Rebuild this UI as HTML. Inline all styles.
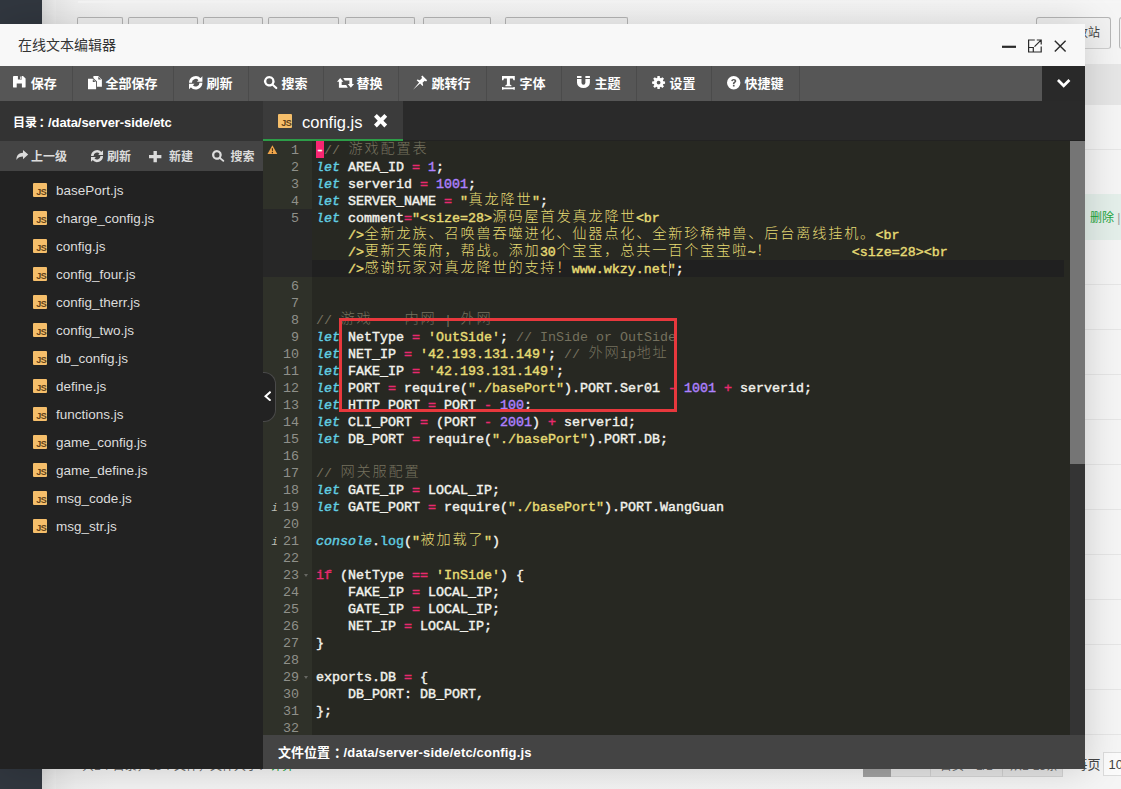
<!DOCTYPE html>
<html lang="zh-CN">
<head>
<meta charset="utf-8">
<title>在线文本编辑器</title>
<style>
*{box-sizing:border-box;margin:0;padding:0}
html,body{width:1121px;height:789px;overflow:hidden}
body{position:relative;background:#f1f1f1;font-family:"Liberation Sans","Noto Sans CJK SC",sans-serif;font-size:13px;color:#333}
.abs{position:absolute}
/* ---------- page behind the dialog ---------- */
#bg-side{left:0;top:0;width:42px;height:789px;background:#31373f}
#bg-main{left:42px;top:0;width:1079px;height:789px;background:linear-gradient(90deg,#dadada 0,#ebebeb 14px,#f0f0f0 15px)}
#bg-panel{left:56px;top:0;width:1065px;height:789px;background:linear-gradient(90deg,#e8e8e8 0,#f0f0f0 20px,#f4f4f4 60px,#f5f5f5 100%)}
.bgbtn{position:absolute;top:17px;height:12px;border:1px solid #b6b6b6;border-bottom:0;border-radius:2px 2px 0 0;background:#f1f1f1}
/* ---------- dialog ---------- */
#dlg{left:0;top:24px;width:1085px;height:745px;background:#222;box-shadow:1px 1px 36px rgba(0,0,0,.17)}
#title{left:0;top:0;width:1085px;height:42px;background:#f8f8f8;color:#333;font-size:14px;line-height:42px;padding-left:18px}
#title svg{position:absolute;top:0;left:0}
#tools{left:0;top:42px;width:1085px;height:35px;background:#292929}
#tools .bar{position:absolute;left:0;top:0;width:1042px;height:35px;background:#565656;display:flex}
.tb{height:35px;border-right:1px solid #4b4b4b;color:#fff;font-weight:bold;font-size:13px;line-height:36px;padding:0 0 0 32.500px;flex:none;white-space:nowrap}
.tb.t-save{padding-left:30.800px}
.ico{position:absolute;display:block;fill:#fff;overflow:visible}
/* ---------- sidebar ---------- */
#side{left:0;top:77px;width:263px;height:668px;background:#222}
#side .hd{position:absolute;left:0;top:0;width:263px;height:40px;background:#333;color:#fff;font-weight:bold;font-size:13px;line-height:43px;padding-left:13px;letter-spacing:-.1px;white-space:nowrap}
#side .hd .cj{font-size:12px;letter-spacing:0}
#side .ops{position:absolute;left:0;top:40px;width:263px;height:30px;background:#444;color:#dcdcdc;font-size:12px;font-weight:bold}
#side .ops span{position:absolute;top:0;height:30px;line-height:33px;white-space:nowrap}
#side .ops svg{fill:#dcdcdc}
.fi{position:absolute;left:0;width:263px;height:28px;color:#dcdcdc;font-size:13.500px;line-height:29px;padding-left:56px;white-space:nowrap}
.fi i,#tab1 i{position:absolute;left:33px;top:7px;width:14px;height:14px;background:#f5be6a;border-radius:1px;color:#5e4017;font:bold 9px/18.500px "Liberation Sans",sans-serif;text-align:right;padding-right:.800px;font-style:normal;letter-spacing:-.5px;overflow:hidden}
#handle{left:263px;top:348px;width:12.500px;height:50px;background:#222;border-radius:0 12px 12px 0;border:1px solid #4a4a4a;border-left:0}
/* ---------- tabs ---------- */
#tabs{left:263px;top:77px;width:822px;height:40px;background:#2a2a2a;border-bottom:1px solid #222}
#tab1{left:0;top:0;width:140px;height:40px;background:#3b3b3b;color:#fff;font-size:16.500px;line-height:43px;white-space:nowrap}
#tab1 i{left:15px;top:13px}
#tabline{left:0;top:37.500px;width:140px;height:2.500px;background:#2d9d48;z-index:2}
#tab1 b{position:absolute;left:39px;top:0;font-weight:normal}
/* ---------- editor ---------- */
#ed{left:263px;top:117px;width:822px;height:594px;background:#272822;overflow:hidden;font-family:"Liberation Mono","Noto Sans CJK SC",monospace;font-size:13.333px;line-height:17px;font-weight:normal;-webkit-text-stroke:.42px;color:#f2f2ec}
#gut{left:0;top:0;width:49px;height:594px;background:#2f3129;color:#8f908a;font-weight:normal;-webkit-text-stroke:0}
#gact{left:0;top:68px;width:49px;height:68px;background:#272727}
.g{position:relative;height:17px;line-height:19px;text-align:right;padding-right:13px;white-space:pre}
.g .warn{position:absolute;left:4px;top:3.800px;width:10.800px;height:9.600px}
.g .info{position:absolute;left:8.500px;top:.5px;font-style:italic;font-weight:normal;font-size:10.500px;color:#c0c1ba}
.g .fold{position:absolute;left:40.500px;top:7.500px;width:0;height:0;border:2.200px solid transparent;border-top:3px solid #666761;border-bottom:0}
#txt{left:53px;top:0;width:760px;height:594px}
.l{height:17px;line-height:19px;white-space:pre}
.l.act{background:#202020;margin-left:-4px;padding-left:4px;width:752px}
.k{color:#61cee2;font-style:italic}
.f{color:#61cee2}
.o,.w{color:#e8296e}
.n{color:#ae81ff}
.s{color:#e6db74}
.c{color:#75715e;font-weight:normal;-webkit-text-stroke:0}
.z{display:inline-block;vertical-align:top;height:17px;font-family:"Noto Sans CJK SC",sans-serif;font-size:14.200px;letter-spacing:1.800px;line-height:17px;font-weight:300;-webkit-text-stroke:0;font-style:normal;position:relative;top:-2.300px;padding-left:.5px;margin-right:-.5px}
.c .z{font-weight:300}
.inv{background:#f92672;color:#f8f8f0;display:inline-block;width:8px;height:17px;vertical-align:top}
#cursor{left:405.500px;top:120px;width:1.200px;height:15px;background:#8a8aa6}
#sb{left:807px;top:0;width:15px;height:594px;background:#343434}
#sbt{left:807px;top:0;width:15px;height:323px;background:#757575}
#redbox{left:76px;top:177px;width:338px;height:94px;border:3px solid #e8383d}
#status{left:263px;top:711px;width:822px;height:34px;background:#444;color:#fff;font-weight:bold;font-size:13px;line-height:35px;padding-left:15px;letter-spacing:.17px;white-space:nowrap}
#status .cj{letter-spacing:0}
.rl{position:absolute;left:1085px;width:36px;height:1px;background:#e6e6e6}
/* text behind dialog */
.bgt{position:absolute;color:#555;font-size:12px;line-height:1;white-space:nowrap}
</style>
</head>
<body>
<div class="abs" id="bg-side"></div>
<div class="abs" id="bg-main"></div>
<div class="abs" id="bg-panel"></div>
<div class="abs" style="left:78px;top:1px;width:1043px;height:1.500px;background:#f6f6f6"></div>
<div class="bgbtn" style="left:77px;width:46px"></div>
<div class="bgbtn" style="left:128px;width:70px"></div>
<div class="bgbtn" style="left:203px;width:60px"></div>
<div class="bgbtn" style="left:268px;width:71px"></div>
<div class="bgbtn" style="left:345px;width:70px"></div>
<div class="bgbtn" style="left:423px;width:68px"></div>
<div class="bgbtn" style="left:505px;width:123px"></div>
<div class="bgbtn" style="left:1036px;top:17px;width:75px;height:32px;border-bottom:1px solid #cfcfcf;border-radius:3px"></div>
<div class="bgbtn" style="left:1119px;top:17px;width:40px;height:32px;border-bottom:1px solid #cfcfcf;border-radius:3px"></div>
<div class="bgt" style="left:1064px;top:27.300px;font-size:12px;color:#444">回收站</div>
<div class="abs" style="left:1085px;top:64px;width:36px;height:41px;background:#e6e6e6"></div>
<div class="abs" style="left:1085px;top:194px;width:36px;height:46px;background:#e4efea"></div>
<div class="rl" style="top:149px"></div><div class="rl" style="top:284px"></div><div class="rl" style="top:329px"></div><div class="rl" style="top:374px"></div><div class="rl" style="top:419px"></div><div class="rl" style="top:464px"></div><div class="rl" style="top:509px"></div><div class="rl" style="top:554px"></div><div class="rl" style="top:599px"></div><div class="rl" style="top:644px"></div><div class="rl" style="top:689px"></div><div class="rl" style="top:734px"></div>
<div class="bgt" style="left:1090px;top:211.500px;color:#20a53a;font-size:12px">删除 <span style="color:#999">|</span></div>
<div class="bgt" style="left:82px;top:760px;font-size:12px;color:#666">共1个目录，13个文件，文件大小：<span style="color:#20a53a">计算</span></div>
<div class="abs" style="left:863px;top:750px;width:200px;height:27px;background:#e4e4e4;border:1px solid #d4d4d4"></div>
<div class="abs" style="left:863px;top:750px;width:28px;height:27px;background:#a2a2a2"></div>
<div class="abs" style="left:930px;top:750px;width:1px;height:27px;background:#d0d0d0"></div>
<div class="abs" style="left:1002px;top:750px;width:1px;height:27px;background:#d0d0d0"></div>
<div class="bgt" style="left:940px;top:760px;font-size:12px;color:#666">首页</div>
<div class="bgt" style="left:976px;top:760px;font-size:12px;color:#666">1/1</div>
<div class="bgt" style="left:1010px;top:760px;font-size:12px;color:#666">从1-13条</div>
<div class="abs" style="left:1103px;top:752px;width:30px;height:24px;background:#fbfbfb;border:1px solid #dcdcdc"></div>
<div class="bgt" style="left:1074.500px;top:758px;font-size:13px;color:#444">每页<span style="margin-left:8px">10</span></div>

<div class="abs" id="dlg">
  <div class="abs" id="title">在线文本编辑器
    <svg width="1085" height="42" viewBox="0 0 1085 42" fill="none" stroke="#2a2a2a">
      <path d="M1002 22.800h14" stroke-width="2.200"/>
      <g transform="translate(1028 15.400)" stroke-width="1.200"><path d="M6.800 .600H.600V12.600H13.200V7M.600 8.100H5.300V12.600M6.500 7.300L13 .800M8.800 .600H13.200V5"/></g>
      <path d="M1054.800 16.700l10.800 10.800M1065.600 16.700l-10.800 10.800" stroke-width="1.400"/>
    </svg>
  </div>
  <div class="abs" id="tools"><div class="bar"><div class="tb t-save" style="width:73px">保存</div><div class="tb t-dup" style="width:101px">全部保存</div><div class="tb t-refresh" style="width:75px">刷新</div><div class="tb t-search" style="width:75px">搜索</div><div class="tb t-retweet" style="width:75px">替换</div><div class="tb t-pin" style="width:88px">跳转行</div><div class="tb t-font" style="width:75px">字体</div><div class="tb t-magnet" style="width:75px">主题</div><div class="tb t-cog" style="width:75px">设置</div><div class="tb t-q" style="width:88px">快捷键</div></div><svg class="ico" style="left:12.5px;top:10.1px" width="12.6" height="11.6" viewBox="0 0 12.6 11.6" fill-rule="evenodd"><path d="M.9 0H10L12.6 2.500V10.700a.9.9 0 0 1-.9.900H.9a.9.9 0 0 1-.9-.900V.9A.9.9 0 0 1 .9 0zM4.900 0V3.400H8.800V0zM3.700 7.400V11.600H8.900V7.400zM7.300.5h1v2.400h-1z"/></svg><svg class="ico" style="left:87.8px;top:9.8px" width="13.9" height="13.2" viewBox="0 0 13.9 13.2" fill-rule="evenodd"><path d="M0 2.700H4.700L8.100 6V13.200H0zM4.800 3.400V6h2.700zM5.400 0h4.800l3.700 3.500v7.200H9V5.600L5.400 2.100zM10.300.8v2.800h2.900z"/></svg><svg class="ico" style="left:188.7px;top:9.6px" width="13.4" height="13.4" viewBox="0 0 13.4 13.4"><path d="M0 6.7A6.7 6.7 0 0 1 11.68 2.22L9.52 4.16A3.8 3.8 0 0 0 2.9 6.7ZM13.4 0.2 L13.4 5.7 L7.9 5.7ZM13.4 6.7A6.7 6.7 0 0 1 1.72 11.18L3.88 9.24A3.8 3.8 0 0 0 10.5 6.7ZM0 13.2 L0 7.7 L5.5 7.7Z"/></svg><svg class="ico" style="left:263.9px;top:10.1px" width="13.5" height="13.2" viewBox="0 0 13.5 13.2" fill-rule="evenodd"><path d="M5.300 0a5.300 5.300 0 0 1 4.350 8.330l3.400 3.050a1.050 1.050 0 0 1-1.500 1.500L8.300 9.650A5.300 5.300 0 1 1 5.300 0zM5.300 2.300a3 3 0 1 0 0 6 3 3 0 0 0 0-6z"/></svg><svg class="ico" style="left:336.6px;top:12.3px" width="17.1" height="9.7" viewBox="0 0 17.1 9.7"><path d="M3.200 0L6.400 3.800H4.700V7.100H9.200L10.800 9.700H1.900V3.800H0zM6.200 0H15.200V5.900H17.100L13.900 9.700 10.700 5.900H12.400V2.600H7.800z"/></svg><svg class="ico" style="left:413.2px;top:10.1px" width="14.5" height="13.7" viewBox="0 0 14.5 13.7"><path d="M0 13.700L6.080 6.630 3.680 4.220 4.380 3.520 6.860 4.150 9.050 1.960 8.270 .620 9.330 -.440 14.140 4.370 13.080 5.430 11.740 4.650 9.550 6.840 10.180 9.320 9.480 10.020 7.070 7.620z"/></svg><svg class="ico" style="left:502.2px;top:10px" width="12.8" height="13.8" viewBox="0 0 12.8 13.8"><path d="M0 0H12.800V4.300H11.500L10.800 2.600H7.900V8.600L9.400 9.200V10.300H3.400V9.200L4.900 8.600V2.600H2L1.300 4.300H0zM0 10.900H1.400V11.500H11.400V10.900H12.800V13.800H11.400V13.200H1.400V13.800H0z"/></svg><svg class="ico" style="left:577.1px;top:10.4px" width="12.9" height="12.1" viewBox="0 0 12.9 12.1"><path d="M0 0H4.500V2.100H0zM8.400 0H12.900V2.100H8.400zM0 2.900H4.500V6.800a1.950 1.950 0 0 0 3.900 0V2.900H12.900V6.800A6.450 5.300 0 0 1 0 6.800z"/></svg><svg class="ico" style="left:651.8px;top:9.9px" width="13.2" height="13.2" viewBox="0 0 13.2 13.2" fill-rule="evenodd"><path d="M5.31 1.87 L5.41 0.11 L7.79 0.11 L7.89 1.87 L9.03 2.34 L10.35 1.17 L12.03 2.85 L10.86 4.17 L11.33 5.31 L13.09 5.41 L13.09 7.79 L11.33 7.89 L10.86 9.03 L12.03 10.35 L10.35 12.03 L9.03 10.86 L7.89 11.33 L7.79 13.09 L5.41 13.09 L5.31 11.33 L4.17 10.86 L2.85 12.03 L1.17 10.35 L2.34 9.03 L1.87 7.89 L0.11 7.79 L0.11 5.41 L1.87 5.31 L2.34 4.17 L1.17 2.85 L2.85 1.17 L4.17 2.34ZM4.7 6.6a1.9 1.9 0 1 0 3.8 0a1.9 1.9 0 1 0 -3.8 0z"/></svg><svg class="ico" style="left:726.9px;top:9.7px" width="13.4" height="13.4" viewBox="0 0 13.4 13.4" fill-rule="evenodd"><path d="M6.700 0a6.700 6.700 0 1 1 0 13.400 6.700 6.700 0 0 1 0-13.400zM5.900 8.900v1.600h1.700V8.900zM6.800 3C5.300 3 4.400 3.800 4.200 5l1.500.3c.1-.6.450-.95 1.050-.95.5 0 .85.250.85.700s-.2.600-.7.950c-.75.500-1 .95-1 1.700v.5h1.600v-.35c0-.4.150-.6.700-1 .75-.5 1.100-1 1.100-1.850C9.300 3.750 8.300 3 6.800 3z"/></svg><svg class="ico" style="left:1056.9px;top:12.9px" width="13.4" height="8.7" viewBox="0 0 13.4 8.7"><path d="M1.900 0L6.700 4.800 11.500 0 13.400 1.900 6.700 8.700 0 1.900z"/></svg></div>
  <div class="abs" id="side">
    <div class="hd"><span class="cj">目录<span style="margin-left:1.800px;margin-right:-2.800px">：</span></span>/data/server-side/etc</div>
    <div class="ops"><svg class="ico" style="left:15.5px;top:9.4px" width="12.2" height="9.9" viewBox="0 0 12.2 9.9"><path d="M7 0L12.200 4.600 7 9.200V6.400C4 6.400 2 7.300 .500 9.900 .300 5.800 2.600 3 7 2.800z"/></svg><span style="left:31px">上一级</span><svg class="ico" style="left:90.9px;top:9.2px" width="12.06" height="12.06" viewBox="0 0 13.4 13.4"><path d="M0 6.7A6.7 6.7 0 0 1 11.68 2.22L9.52 4.16A3.8 3.8 0 0 0 2.9 6.7ZM13.4 0.2 L13.4 5.7 L7.9 5.7ZM13.4 6.7A6.7 6.7 0 0 1 1.72 11.18L3.88 9.24A3.8 3.8 0 0 0 10.5 6.7ZM0 13.2 L0 7.7 L5.5 7.7Z"/></svg><span style="left:107px">刷新</span><svg class="ico" style="left:149.3px;top:9.8px" width="12.4" height="11.2" viewBox="0 0 12.4 11.2"><path d="M4.500 0h3.400v3.900h4.500v3.400H7.900v3.900H4.500V7.300H0V3.900h4.500z"/></svg><span style="left:169px">新建</span><svg class="ico" style="left:212px;top:9.2px" width="12.4" height="11.8" viewBox="0 0 12.4 11.8" fill-rule="evenodd"><path d="M4.900 0a4.900 4.900 0 0 1 4.050 7.650l3.100 2.500a1 1 0 0 1-1.350 1.450L7.700 8.900A4.900 4.900 0 1 1 4.900 0zM4.900 2.300a2.600 2.600 0 1 0 0 5.200 2.600 2.600 0 0 0 0-5.200z"/></svg><span style="left:230.600px">搜索</span></div>
    <div class="fi" style="top:75px"><i>JS</i>basePort.js</div><div class="fi" style="top:103px"><i>JS</i>charge_config.js</div><div class="fi" style="top:131px"><i>JS</i>config.js</div><div class="fi" style="top:159px"><i>JS</i>config_four.js</div><div class="fi" style="top:187px"><i>JS</i>config_therr.js</div><div class="fi" style="top:215px"><i>JS</i>config_two.js</div><div class="fi" style="top:243px"><i>JS</i>db_config.js</div><div class="fi" style="top:271px"><i>JS</i>define.js</div><div class="fi" style="top:299px"><i>JS</i>functions.js</div><div class="fi" style="top:327px"><i>JS</i>game_config.js</div><div class="fi" style="top:355px"><i>JS</i>game_define.js</div><div class="fi" style="top:383px"><i>JS</i>msg_code.js</div><div class="fi" style="top:411px"><i>JS</i>msg_str.js</div>
  </div>
  <div class="abs" id="tabs"><div class="abs" id="tabline"></div><div class="abs" id="tab1"><i>JS</i><b>config.js</b><svg class="ico" style="left:110.9px;top:12.9px" width="13.2" height="13.4" viewBox="0 0 13.2 13.4"><path d="M2.830 0L6.600 3.870 10.370 0 13.200 2.830 9.430 6.700 13.200 10.570 10.370 13.400 6.600 9.530 2.830 13.400 0 10.570 3.770 6.700 0 2.830z"/></svg></div></div>
  <div class="abs" id="ed">
    <div class="abs" id="gut"><div class="abs" id="gact"></div>
<div class="g"><svg class="warn" viewBox="0 0 12 11"><path d="M6 0.3 L11.8 10.7 H0.2 Z" fill="#f0a54a"/><path d="M5.3 3.6h1.4l-.25 3.6h-.9zM5.3 8h1.4v1.4H5.3z" fill="#3a2a12"/></svg>1</div>
<div class="g">2</div>
<div class="g">3</div>
<div class="g">4</div>
<div class="g">5</div>
<div class="g"></div>
<div class="g"></div>
<div class="g"></div>
<div class="g">6</div>
<div class="g">7</div>
<div class="g">8</div>
<div class="g">9</div>
<div class="g">10</div>
<div class="g">11</div>
<div class="g">12</div>
<div class="g">13</div>
<div class="g">14</div>
<div class="g">15</div>
<div class="g">16</div>
<div class="g">17</div>
<div class="g">18</div>
<div class="g"><em class="info">i</em>19</div>
<div class="g">20</div>
<div class="g"><em class="info">i</em>21</div>
<div class="g">22</div>
<div class="g"><u class="fold"></u>23</div>
<div class="g">24</div>
<div class="g">25</div>
<div class="g">26</div>
<div class="g">27</div>
<div class="g">28</div>
<div class="g"><u class="fold"></u>29</div>
<div class="g">30</div>
<div class="g">31</div>
<div class="g">32</div>
    </div>
    <div class="abs" id="txt">
<div class="l"><span class="inv">-</span><span class="c">// <span class="z">游戏配置表</span></span></div>
<div class="l"><span class="k">let</span> AREA_ID <span class="o">=</span> <span class="n">1</span>;</div>
<div class="l"><span class="k">let</span> serverid <span class="o">=</span> <span class="n">1001</span>;</div>
<div class="l"><span class="k">let</span> SERVER_NAME <span class="o">=</span> <span class="s">"<span class="z">真龙降世</span>"</span>;</div>
<div class="l"><span class="k">let</span> comment<span class="o">=</span><span class="s">"&lt;size=28&gt;<span class="z">源码屋首发真龙降世</span>&lt;br</span></div>
<div class="l">    <span class="s">/&gt;<span class="z">全新龙族、召唤兽吞噬进化、仙器点化、全新珍稀神兽、后台离线挂机。</span>&lt;br</span></div>
<div class="l">    <span class="s">/&gt;<span class="z">更新天策府，帮战。添加</span>30<span class="z">个宝宝，总共一百个宝宝啦</span>~<span class="z">！</span>          &lt;size=28&gt;&lt;br</span></div>
<div class="l act">    <span class="s">/&gt;<span class="z">感谢玩家对真龙降世的支持！</span>www.wkzy.net"</span>;</div>
<div class="l"></div>
<div class="l"></div>
<div class="l"><span class="c">// <span class="z">游戏</span>    <span class="z">内网</span> | <span class="z">外网</span></span></div>
<div class="l"><span class="k">let</span> NetType <span class="o">=</span> <span class="s">'OutSide'</span>; <span class="c">// InSide or OutSide</span></div>
<div class="l"><span class="k">let</span> NET_IP <span class="o">=</span> <span class="s">'42.193.131.149'</span>; <span class="c">// <span class="z">外网</span>ip<span class="z">地址</span></span></div>
<div class="l"><span class="k">let</span> FAKE_IP <span class="o">=</span> <span class="s">'42.193.131.149'</span>;</div>
<div class="l"><span class="k">let</span> PORT <span class="o">=</span> require(<span class="s">"./basePort"</span>).PORT.Ser01 <span class="o">-</span> <span class="n">1001</span> <span class="o">+</span> serverid;</div>
<div class="l"><span class="k">let</span> HTTP_PORT <span class="o">=</span> PORT <span class="o">-</span> <span class="n">100</span>;</div>
<div class="l"><span class="k">let</span> CLI_PORT <span class="o">=</span> (PORT <span class="o">-</span> <span class="n">2001</span>) <span class="o">+</span> serverid;</div>
<div class="l"><span class="k">let</span> DB_PORT <span class="o">=</span> require(<span class="s">"./basePort"</span>).PORT.DB;</div>
<div class="l"></div>
<div class="l"><span class="c">// <span class="z">网关服配置</span></span></div>
<div class="l"><span class="k">let</span> GATE_IP <span class="o">=</span> LOCAL_IP;</div>
<div class="l"><span class="k">let</span> GATE_PORT <span class="o">=</span> require(<span class="s">"./basePort"</span>).PORT.WangGuan</div>
<div class="l"></div>
<div class="l"><span class="k">console</span>.<span class="f">log</span>(<span class="s">"<span class="z">被加载了</span>"</span>)</div>
<div class="l"></div>
<div class="l"><span class="w">if</span> (NetType <span class="o">==</span> <span class="s">'InSide'</span>) {</div>
<div class="l">    FAKE_IP <span class="o">=</span> LOCAL_IP;</div>
<div class="l">    GATE_IP <span class="o">=</span> LOCAL_IP;</div>
<div class="l">    NET_IP <span class="o">=</span> LOCAL_IP;</div>
<div class="l">}</div>
<div class="l"></div>
<div class="l">exports.DB <span class="o">=</span> {</div>
<div class="l">    DB_PORT: DB_PORT,</div>
<div class="l">};</div>
<div class="l"></div>
    </div>
    <div class="abs" id="cursor"></div>
    <div class="abs" id="redbox"></div>
    <div class="abs" id="sb"></div><div class="abs" id="sbt"></div>
  </div>
  <div class="abs" id="handle"><svg class="abs" style="left:1px;top:18px" width="7.300" height="10.400" viewBox="0 0 7.300 10.400"><path d="M5.900 0L7.300 1.400 3 5.200 7.300 9 5.900 10.400 0 5.200z" fill="#fff"/></svg></div>
  <div class="abs" id="status"><span class="cj">文件位置<span style="margin-left:4px;margin-right:-3.500px">：</span></span>/data/server-side/etc/config.js</div>
</div>
</body>
</html>
